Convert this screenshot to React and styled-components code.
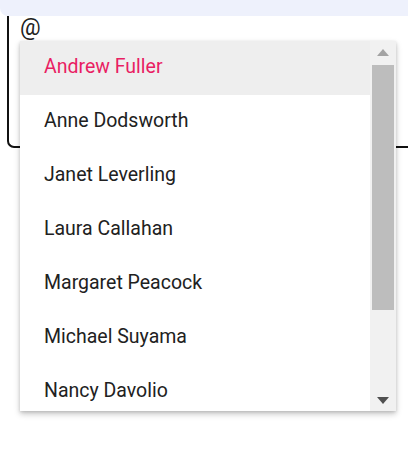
import React from "react";
import styled, { createGlobalStyle } from "styled-components";

const GlobalStyle = createGlobalStyle`
  html, body {
    margin: 0;
    padding: 0;
    background: #fff;
    overflow: hidden;
    font-family: Roboto, "Liberation Sans", sans-serif;
  }
`;

const Page = styled.div`
  position: relative;
  width: 408px;
  height: 465px;
`;

const Band = styled.div`
  height: 16px;
  background: #eef1fc;
  border-bottom-left-radius: 8px;
`;

const Editor = styled.div`
  margin-left: 7px;
  height: 132px;
  border: 2px solid #111;
  border-top: none;
  border-right: none;
  border-bottom-left-radius: 7px;
  padding: 0 0 0 11px;
  box-sizing: border-box;
`;

const Trigger = styled.span`
  font-size: 23px;
  line-height: 24px;
  color: #222;
`;

const Popup = styled.div`
  position: absolute;
  left: 20px;
  top: 41px;
  width: 376px;
  height: 370px;
  display: flex;
  background: #fff;
  box-shadow: 0 3px 6px rgba(0, 0, 0, 0.22), 0 1px 3px rgba(0, 0, 0, 0.12);
  overflow: hidden;
`;

const List = styled.ul`
  flex: 1;
  margin: 0;
  padding: 0;
  list-style: none;
  overflow: hidden;
`;

const Item = styled.li`
  height: 54px;
  box-sizing: border-box;
  display: flex;
  align-items: center;
  padding: 0 0 4px 24px;
  font-size: 19.5px;
  color: ${(p) => (p.active ? "#e91e63" : "#212121")};
  background: ${(p) => (p.active ? "#eeeeee" : "#fff")};
`;

const ScrollBar = styled.div`
  width: 26px;
  display: flex;
  flex-direction: column;
  align-items: center;
  background: #f1f1f1;
`;

const Arrow = styled.div`
  height: 22px;
  display: flex;
  align-items: center;
  justify-content: center;
`;

const Track = styled.div`
  flex: 1;
  width: 100%;
  padding: 2px;
  box-sizing: border-box;
`;

const Thumb = styled.div`
  height: 245px;
  background: #bdbdbd;
`;

const names = [
  "Andrew Fuller",
  "Anne Dodsworth",
  "Janet Leverling",
  "Laura Callahan",
  "Margaret Peacock",
  "Michael Suyama",
  "Nancy Davolio",
];

export default function App() {
  return (
    <Page>
      <GlobalStyle />
      <Band />
      <Editor>
        <Trigger>@</Trigger>
      </Editor>
      <Popup>
        <List>
          {names.map((n, i) => (
            <Item key={n} active={i === 0}>
              {n}
            </Item>
          ))}
        </List>
        <ScrollBar>
          <Arrow>
            <svg width="12" height="7" viewBox="0 0 12 7">
              <path d="M0 7 L6 0 L12 7 Z" fill="#a3a3a3" />
            </svg>
          </Arrow>
          <Track>
            <Thumb />
          </Track>
          <Arrow>
            <svg width="12" height="7" viewBox="0 0 12 7">
              <path d="M0 0 L12 0 L6 7 Z" fill="#505050" />
            </svg>
          </Arrow>
        </ScrollBar>
      </Popup>
    </Page>
  );
}
